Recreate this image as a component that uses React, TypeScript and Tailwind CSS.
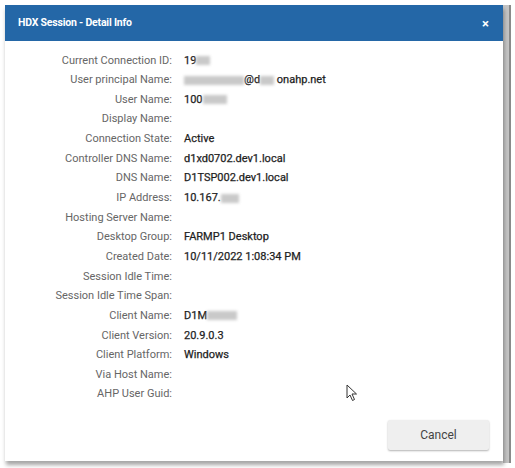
import React from "react";

type Row = { label: string; value?: React.ReactNode };

function Blur({ w }: { w: number }) {
  // redacted part of a value
  return <span className="inline-block h-[9px] bg-[#c9c9c9] blur-[1.5px] align-middle" style={{ width: w }} />;
}

const rows: Row[] = [
  { label: "Current Connection ID:", value: <>19<Blur w={14} /></> },
  {
    label: "User principal Name:",
    value: (
      <>
        <Blur w={60} />@d<Blur w={14} /> onahp.net
      </>
    ),
  },
  { label: "User Name:", value: <>100<Blur w={24} /></> },
  { label: "Display Name:" },
  { label: "Connection State:", value: "Active" },
  { label: "Controller DNS Name:", value: "d1xd0702.dev1.local" },
  { label: "DNS Name:", value: "D1TSP002.dev1.local" },
  { label: "IP Address:", value: <>10.167.<Blur w={18} /></> },
  { label: "Hosting Server Name:" },
  { label: "Desktop Group:", value: "FARMP1 Desktop" },
  { label: "Created Date:", value: "10/11/2022 1:08:34 PM" },
  { label: "Session Idle Time:" },
  { label: "Session Idle Time Span:" },
  { label: "Client Name:", value: <>D1M<Blur w={30} /></> },
  { label: "Client Version:", value: "20.9.0.3" },
  { label: "Client Platform:", value: "Windows" },
  { label: "Via Host Name:" },
  { label: "AHP User Guid:" },
];

export default function App() {
  return (
    <div className="relative w-[515px] h-[468px] bg-white overflow-hidden font-['Roboto',sans-serif]">
      {/* strip of the page behind the dialog */}
      <div className="absolute left-[503px] top-[5px] w-[8px] h-[458px] bg-[#c4c4c4] border-r-2 border-[#8a8a8a]" />
      <div className="absolute left-[5px] top-[5px] w-[498px] h-[456px] bg-white flex flex-col shadow-[1px_4px_4px_rgba(0,0,0,0.35)]">
        <div className="h-[36px] bg-[#2467a7] flex items-center justify-between pl-[13px] pr-[14px] shrink-0">
          <span className="text-white text-[10.5px] font-bold tracking-[-0.2px]">HDX Session - Detail Info</span>
          <span className="text-white text-[13px] font-bold leading-none">×</span>
        </div>
        <div className="pt-[10px] flex flex-col">
          {rows.map((r) => (
            <div key={r.label} className="flex items-center h-[19.65px] text-[11px]">
              <div className="w-[167px] text-right text-[#666666]">{r.label}</div>
              <div className="pl-[12px] text-[#1e1e1e] font-normal [-webkit-text-stroke:0.25px_#1e1e1e] whitespace-nowrap">{r.value}</div>
            </div>
          ))}
        </div>
        <div className="flex-1" />
        <div className="flex justify-end pr-[14px] pb-[11px]">
          <button className="w-[101px] h-[30px] bg-[#efefef] rounded-[2px] text-[12px] text-[#444444] shadow-[0_1px_2px_rgba(0,0,0,0.3)]">
            Cancel
          </button>
        </div>
      </div>
      {/* mouse pointer */}
      <svg className="absolute left-[346px] top-[384px]" width="12" height="18" viewBox="0 0 12 18">
        <path d="M1 1 L1 14 L4 11 L6.5 16.5 L8.5 15.5 L6 10 L10.5 10 Z" fill="white" stroke="#333" strokeWidth="1" strokeLinejoin="round" />
      </svg>
    </div>
  );
}
